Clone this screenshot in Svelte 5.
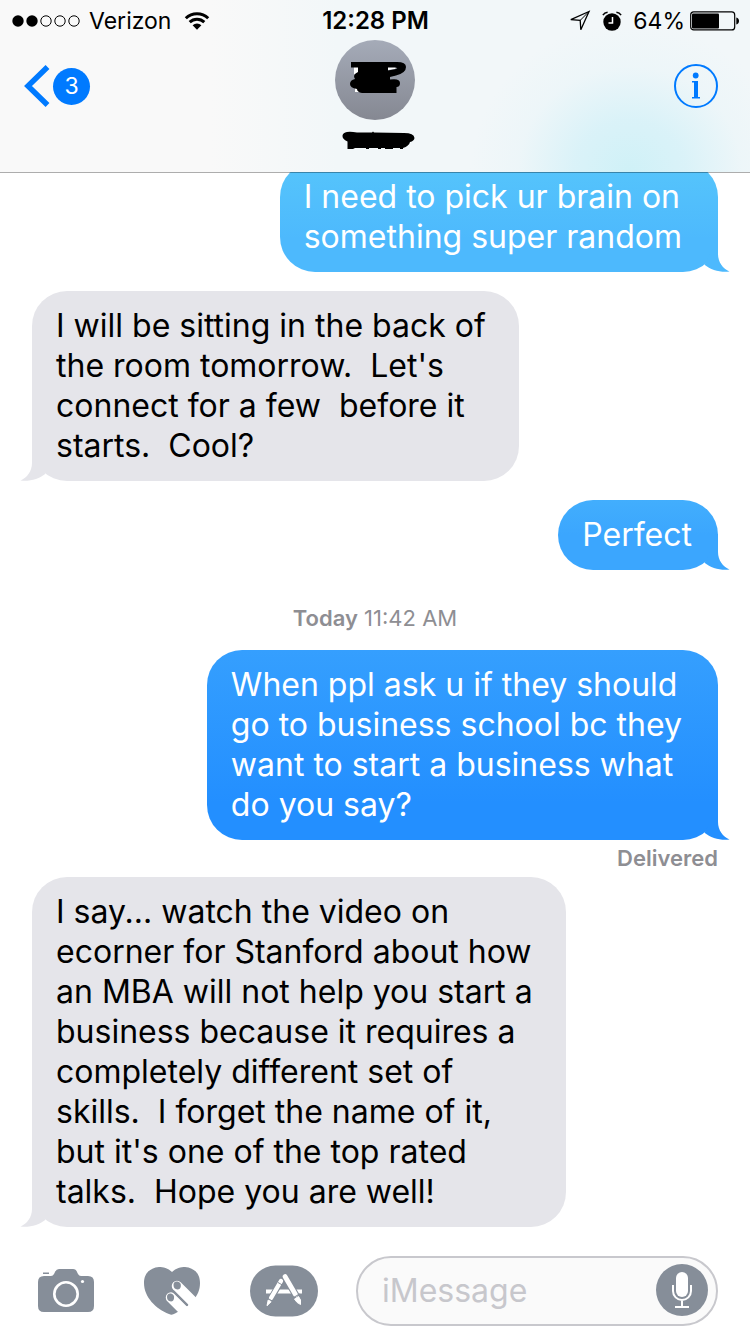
<script>
  const messages = [
    { id: 1, from: 'me', tone: 'light', text: 'I need to pick ur brain on\nsomething super random' },
    { id: 2, from: 'them', tone: 'grey', text: "I will be sitting in the back of\nthe room tomorrow.  Let's\nconnect for a few  before it\nstarts.  Cool?" },
    { id: 3, from: 'me', tone: 'mid', text: 'Perfect' },
    { id: 4, from: 'me', tone: 'deep', day: 'Today', time: '11:42 AM', receipt: 'Delivered', text: 'When ppl ask u if they should\ngo to business school bc they\nwant to start a business what\ndo you say?' },
    { id: 5, from: 'them', tone: 'grey', text: "I say... watch the video on\necorner for Stanford about how\nan MBA will not help you start a\nbusiness because it requires a\ncompletely different set of\nskills.  I forget the name of it,\nbut it's one of the top rated\ntalks.  Hope you are well!" }
  ];
  let draft = $state('');
</script>

<div class="app">
  <header>
    <div class="status">
      <div class="side">
        <svg width="70" height="14" viewBox="0 0 70 14" aria-hidden="true">
          <circle cx="7" cy="7" r="5.7" /><circle cx="21" cy="7" r="5.7" />
          <g fill="none" stroke="#000" stroke-width="1"><circle cx="35" cy="7" r="5.2" /><circle cx="49" cy="7" r="5.2" /><circle cx="63" cy="7" r="5.2" /></g>
        </svg>
        <span class="carrier">Verizon</span>
        <svg width="26" height="20" viewBox="0 0 26 20" aria-hidden="true">
          <g fill="none" stroke="#000" stroke-width="3"><path d="M1.8 7.2a16 16 0 0 1 22.4 0" /><path d="M5.7 11.2a10.5 10.5 0 0 1 14.6 0" /></g>
          <path d="M8.6 14.2a6.3 6.3 0 0 1 8.8 0L13 18.8z" />
        </svg>
      </div>
      <time class="clock">12:28 PM</time>
      <div class="side end">
        <svg width="22" height="22" viewBox="0 0 22 22" aria-hidden="true"><path d="M20 1.5L1.8 9.6l9.4.8.6 9.3z" fill="none" stroke="#000" stroke-width="1.3" /><path d="M20 1.5l-8.8 8.9" stroke="#000" /></svg>
        <svg class="alarm" width="20" height="20" viewBox="0 0 20 20" aria-hidden="true">
          <circle cx="10" cy="11" r="8.7" /><path d="M10.500 6v6H6.500" fill="none" stroke="#fff" stroke-width="1.5" /><path d="M.9 4.2Q2.5 1.6 5.6 1.2M14.4 1.2q3.1.4 4.7 3" fill="none" stroke="#000" stroke-width="1.5" />
        </svg>
        <span class="percent">64%</span>
        <svg width="50" height="20" viewBox="0 0 50 20" aria-hidden="true">
          <rect x=".7" y=".9" width="44" height="18" rx="3" fill="none" stroke="#000" stroke-width="1.2" /><rect x="2" y="2.5" width="27" height="15" rx="1" /><path d="M46.3 6.5q2.7.6 2.7 3.5t-2.7 3.5z" />
        </svg>
      </div>
    </div>

    <nav>
      <button class="back" aria-label="Back, 3 unread">
        <svg width="26" height="42" viewBox="0 0 26 42" aria-hidden="true"><path d="M23.500 2L4 21l19.500 19" fill="none" stroke="#007aff" stroke-width="5.500" /></svg>
        <span class="count">3</span>
      </button>
      <div class="contact">
        <svg width="80" height="80" viewBox="0 0 80 80" aria-hidden="true">
          <defs><linearGradient id="face" x1="0" y1="0" x2="0" y2="1"><stop offset="0" stop-color="#a5abb8" /><stop offset="1" stop-color="#858892" /></linearGradient></defs>
          <circle cx="40" cy="40" r="40" fill="url(#face)" />
          <path d="M19 27h5v7h-5zM53 27h8l-1 2-7 1zM20 47h6v5h-6z" fill="#fff" />
          <path d="M16 22H62Q71 22 71 27Q71 33 61 35.500L55 37V39.500Q65 38 65 43Q65 47 61.500 47V53H27Q22 52 22 49Q15 48 15 44Q15 40 20 39Q17 35 23 32V27.500H16zM53 27.500V30.500L61 29Q64 27.500 60 27.500z" fill-rule="evenodd" />
        </svg>
        <svg width="80" height="22" viewBox="0 0 80 22" aria-hidden="true">
          <path d="M12 2Q16 1.500 22 2.500H37L38 1.500L39 2.500L69 3Q79 3 79.500 8Q79 11 75 12Q74 16 68 18V19H65V18H58V19H50V18H46V19H43V18H34V19H31V18H20L18 19H12.500V11.500Q7 9 7.500 5.500Q8 2.500 12 2z" />
        </svg>
      </div>
      <button class="info" aria-label="Details">
        <svg width="44" height="44" viewBox="0 0 44 44" aria-hidden="true"><circle cx="22" cy="22" r="21" fill="none" stroke="#007aff" stroke-width="2" /><g fill="#007aff"><circle cx="21.700" cy="11.500" r="2.900" /><path d="M18 17h6v16h2v1.500h-8V33h2V18.500h-2z" /></g></svg>
      </button>
    </nav>
  </header>

  <main>
    {#each messages as m (m.id)}
      {#if m.day}<p class="stamp"><b>{m.day}</b> {m.time}</p>{/if}
      <div class="bubble {m.from} {m.tone}">
        <p>{m.text}</p>
        <svg class="tail" width="30" height="36" viewBox="0 -6 30 36" aria-hidden="true"><path d="M16 -6H18V12C18 20 23 27 29.500 29.500C20 30.500 11 28 4.500 22.700L12 8Z" fill="currentColor" /></svg>
      </div>
      {#if m.receipt}<p class="receipt">{m.receipt}</p>{/if}
    {/each}
  </main>

  <form onsubmit={(e) => e.preventDefault()}>
    <button type="button" aria-label="Camera">
      <svg width="56" height="44" viewBox="0 0 56 44" aria-hidden="true">
        <path d="M5 3.500h6v1.500H5zM6 7h7q2 0 3-2l1-2q1.500-3 4-3h14q3 0 4 3l1 2q1 2 3 2h7q6 0 6 6v24q0 6-6 6H6q-6 0-6-6V13Q0 7 6 7z" fill="#868e99" />
        <circle cx="28" cy="25" r="11.700" fill="none" stroke="#fff" stroke-width="2.600" /><circle cx="44.500" cy="12.500" r="1.600" fill="#fff" />
      </svg>
    </button>
    <button type="button" aria-label="Digital Touch">
      <svg width="56" height="48" viewBox="0 0 56 48" aria-hidden="true">
        <path d="M28 5C24 1 19 0 15 0C5 1 0 7 0 16C0 30 12 42 25 47Q28 48.500 31 46.500C46 38 56 30 56 16C56 7 51 1 41 0C37 0 32 1 28 5z" fill="#868e99" />
        <path d="M44 38.500L60 24V48H34z" fill="#fff" />
        <path d="M33 19l21 21M27 30.500l21 21" stroke="#fff" stroke-width="10.500" stroke-linecap="round" />
        <path d="M29.500 24.500L43 38" stroke="#868e99" stroke-width="2.400" stroke-linecap="round" />
        <path d="M29.500 18q0-4 4-3.500 4 1 3.300 5-.5 3-3.300 3-4-.5-4-4.500zM23 30q0-4 4-3.500 3.700 1 3 5-.5 3-3 3-4-.5-4-4.500z" fill="#868e99" />
      </svg>
    </button>
    <button type="button" aria-label="Apps">
      <svg width="68" height="52" viewBox="0 0 68 52" aria-hidden="true">
        <rect y=".5" width="68" height="51" rx="25.500" fill="#868e99" />
        <path d="M16 24.500h36v4H16z" fill="#fff" />
        <g stroke-linecap="round">
          <path d="M31 16L21 33.500" stroke="#868e99" stroke-width="6.500" /><path d="M31 16L21 33" stroke="#fff" stroke-width="4.400" />
          <path d="M35 11.500L45.500 29.500" stroke="#868e99" stroke-width="7" /><path d="M35 11.500L45.500 29.500" stroke="#fff" stroke-width="4.800" />
        </g>
        <path d="M18.200 35l3 1.700-4.200 4z" fill="#fff" stroke="#fff" stroke-linejoin="round" />
        <path d="M44.500 34l4-2.500q3 3 2 8-4-1.500-6-5.500z" fill="#fff" stroke="#fff" stroke-linejoin="round" />
        <path d="M28 17.500l4 2.300M18 33.500l4.500 2.600M43 32.800l6.500-3.800" stroke="#868e99" />
      </svg>
    </button>
    <div class="field">
      <input aria-label="Message" placeholder="iMessage" bind:value={draft} />
      <button type="button" class="mic" aria-label="Record audio">
        <svg width="52" height="52" viewBox="0 0 52 52" aria-hidden="true"><circle cx="26" cy="26" r="26" fill="#868e99" /><rect x="20" y="8" width="12" height="25" rx="6" fill="#fff" /><path d="M17 21v6a9 9 0 0 0 18 0v-6M26 36v7M19 43h14" fill="none" stroke="#fff" stroke-width="2" /></svg>
      </button>
    </div>
  </form>
</div>

<style>
  :global(body) { background: #fff; }
  .app { font-family: Inter, "Liberation Sans", sans-serif; color: #000; min-height: 100vh; display: flex; flex-direction: column; overflow: hidden; }
  button { border: 0; padding: 0; background: none; font: inherit; display: flex; align-items: center; cursor: pointer; }
  svg { display: block; flex: none; }
  p { margin: 0; }

  header {
    position: relative; z-index: 1; box-sizing: border-box; height: 173px;
    border-bottom: 1px solid rgb(0 0 0 / .32);
    background:
      radial-gradient(ellipse 160px 150px at 630px 172px, #cff1f7, rgb(212 241 248 / .8) 35%, rgb(228 244 248 / .35) 70%, rgb(238 246 248 / 0)) padding-box,
      linear-gradient(90deg, #f9f9f9 28%, #f2f7f9 45%, #f2f7f9) padding-box;
  }
  .status { display: grid; grid-template-columns: 1fr auto 1fr; align-items: center; box-sizing: border-box; height: 40px; padding: 2px 10px 0 11px; font-size: 23px; line-height: 38px; }
  .side { display: flex; align-items: center; }
  .carrier { margin: 0 13px 0 8px; }
  .clock { font-size: 24px; font-weight: 600; }
  .end { justify-content: flex-end; }
  .alarm { margin: 0 11px; }
  .percent { margin-right: 5px; }
  nav { display: grid; grid-template-columns: 1fr auto 1fr; align-items: start; padding: 0 32px 0 24px; }
  .back { gap: 3px; margin-top: 25px; }
  .count { width: 37px; line-height: 37px; border-radius: 50%; background: #007aff; color: #fff; font-size: 23px; text-align: center; }
  .contact { display: flex; flex-direction: column; align-items: center; gap: 10px; padding-left: 8px; }
  .info { justify-self: end; margin-top: 24px; }

  main { flex: 1; display: flex; flex-direction: column; padding: 0 32px; margin-top: -11px; }
  .bubble { position: relative; max-width: 80%; box-sizing: border-box; padding: 15px 33px 15px 24px; border-radius: 35px; font-size: 32px; line-height: 40px; }
  .bubble p { white-space: pre-wrap; }
  .bubble + .bubble { margin-top: 19px; }
  .me { align-self: flex-end; padding-right: 36px; }
  .them { align-self: flex-start; }
  .me p { color: #fff; }
  .them p { color: #000; }
  .light { background: linear-gradient(#56c5fb, #4db9fd 70%); color: #4db9fd; }
  .mid { background: linear-gradient(#42aefd, #3ba6fe 50%); color: #3ba6fe; padding-right: 26px; }
  .deep { background: linear-gradient(#359ffe, #238fff 80%); color: #238fff; }
  .grey { background: #e5e5ea; color: #e5e5ea; }
  .tail { position: absolute; bottom: 0; right: -12px; }
  .them .tail { right: auto; left: -12px; transform: scaleX(-1); }
  .stamp, .receipt { color: #8e8e93; font-size: 22px; }
  .stamp { text-align: center; line-height: 40px; padding: 28px 0 12px; }
  .stamp b { font-weight: 600; }
  .receipt { text-align: right; font-weight: 600; line-height: 37px; }

  form { display: flex; align-items: center; padding: 29px 32px 8px 38px; }
  form > button { margin-right: 50px; }
  form > button:nth-of-type(3) { margin-right: 38px; }
  .field { flex: 1; min-width: 0; box-sizing: border-box; height: 70px; display: flex; align-items: center; border: 2px solid #c8c8cd; border-radius: 35px; background: #fafafa; padding: 0 8px 0 24px; }
  input { flex: 1; min-width: 0; border: 0; outline: 0; padding: 0; background: none; font: 32px/40px Inter, "Liberation Sans", sans-serif; color: #000; }
  input::placeholder { color: #c7c7cc; opacity: 1; }
  .mic { margin-bottom: 2px; }
</style>
